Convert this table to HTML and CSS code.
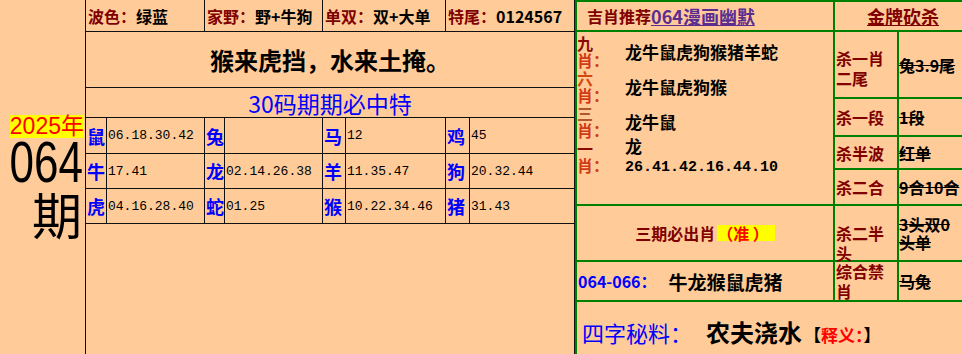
FILE: index.html
```html
<!DOCTYPE html>
<html lang="zh-CN">
<head>
<meta charset="utf-8">
<title>064期</title>
<link rel="stylesheet" href="styles.css">
</head>
<body>
<div class="page">
  <div class="issue">
    <span class="year">2025年</span>
    <div class="num">064</div>
    <div class="qi">期</div>
  </div>

  <div class="mid">
    <div class="grid">
      <div class="info"><span class="k">波色：</span>绿蓝</div>
      <div class="info"><span class="k">家野：</span>野+牛狗</div>
      <div class="info"><span class="k">单双：</span>双+大单</div>
      <div class="info"><span class="k">特尾：</span>0124567</div>
      <div class="motto">猴来虎挡，水来土掩。</div>
      <div class="title">30码期期必中特</div>

      <div class="z">鼠</div><div class="n">06.18.30.42</div>
      <div class="z">兔</div><div class="n"></div>
      <div class="z">马</div><div class="n">12</div>
      <div class="z">鸡</div><div class="n">45</div>

      <div class="z">牛</div><div class="n">17.41</div>
      <div class="z">龙</div><div class="n">02.14.26.38</div>
      <div class="z">羊</div><div class="n">11.35.47</div>
      <div class="z">狗</div><div class="n">20.32.44</div>

      <div class="z">虎</div><div class="n">04.16.28.40</div>
      <div class="z">蛇</div><div class="n">01.25</div>
      <div class="z">猴</div><div class="n">10.22.34.46</div>
      <div class="z">猪</div><div class="n">31.43</div>
    </div>
  </div>

  <div class="side">
    <div class="rec"><span class="rec-k">吉肖推荐</span><span class="link">064漫画幽默</span></div>
    <div class="kill-h"><span>金牌砍杀</span></div>

    <div class="picks">
      <div class="pick">
        <div class="pl"><span class="c1">九</span><br><span class="c2">肖：</span></div>
        <div class="pv">龙牛鼠虎狗猴猪羊蛇</div>
      </div>
      <div class="pick">
        <div class="pl"><span class="c3">六</span><br><span class="c2">肖：</span></div>
        <div class="pv">龙牛鼠虎狗猴</div>
      </div>
      <div class="pick">
        <div class="pl"><span class="c4">三</span><br><span class="c2">肖：</span></div>
        <div class="pv">龙牛鼠</div>
      </div>
      <div class="pick">
        <div class="pl"><span class="c1">一</span><br><span class="c2">肖：</span></div>
        <div class="pv">龙<br><span class="nums">26.41.42.16.44.10</span></div>
      </div>
    </div>

    <div class="kl r2 top1">杀一肖二尾</div>
    <div class="kv r2">兔3.9尾</div>
    <div class="kl r3">杀一段</div>
    <div class="kv r3">1段</div>
    <div class="kl r4">杀半波</div>
    <div class="kv r4">红单</div>
    <div class="kl r5">杀二合</div>
    <div class="kv r5">9合10合</div>

    <div class="must"><span class="must-k">三期必出肖</span><span class="zhun">（准 ）</span></div>
    <div class="kl r6 top2">杀二半头</div>
    <div class="kv r6">3头双0头单</div>

    <div class="range"><span class="rng">064-066：</span><span class="rng-v">牛龙猴鼠虎猪</span></div>
    <div class="kl r7">综合禁肖</div>
    <div class="kv r7">马兔</div>

    <div class="secret"><span class="sk">四字秘料：</span><span class="sv">农夫浇水</span><span class="sx">【<span class="sr">释义：</span>】</span></div>
  </div>
</div>
</body>
</html>
```

FILE: styles.css
```css
* {
  box-sizing: border-box;
  margin: 0;
  padding: 0;
}

html,
body {
  width: 962px;
  height: 354px;
  overflow: hidden;
}

body {
  background: #ffcc99;
  color: #000;
  font-family: "Noto Sans CJK SC", sans-serif;
}

.page {
  display: flex;
  width: 971px;
  height: 354px;
}

/* ---------- left issue column ---------- */
.issue {
  flex: none;
  width: 85px;
  padding-top: 115px;
  padding-right: 1px;
  display: flex;
  flex-direction: column;
  align-items: flex-end;
}

.year {
  display: block;
  font-family: "Liberation Sans", "Noto Sans CJK SC", sans-serif;
  font-size: 23px;
  line-height: 23px;
  color: #ff0000;
  background: #ffff00;
}

.num {
  font-family: "Liberation Sans", sans-serif;
  font-size: 44px;
  line-height: 44px;
  margin-top: 3px;
  margin-right: 1px;
  transform: scaleY(1.3);
  transform-origin: center;
}

.qi {
  font-size: 50px;
  line-height: 50px;
  margin-top: 3px;
  margin-right: 2px;
}

/* ---------- middle table ---------- */
.mid {
  flex: none;
  width: 490px;
  height: 354px;
  border-left: 1px solid #111;
  border-right: 1px solid #111;
}

.grid {
  display: grid;
  grid-template-columns: 20px 97px 19px 97px 22px 99px 23px 104px;
  grid-template-rows: 31px 55px 29px 35px 34px 34px;
  gap: 1px;
  background: #111;
  border-bottom: 1px solid #111;
}

.grid > div {
  background: #ffcc99;
  display: flex;
  align-items: center;
  white-space: nowrap;
}

.info {
  grid-column: span 2;
  padding-left: 2px;
  font-size: 16px;
  font-weight: bold;
}

.k {
  color: #800000;
}

.motto {
  grid-column: span 8;
  justify-content: center;
  font-size: 24px;
  font-weight: bold;
}

.title {
  grid-column: span 8;
  justify-content: center;
  font-size: 23px;
  color: #0000ff;
}

.z {
  padding-left: 1px;
  font-size: 18px;
  font-weight: bold;
  color: #0000ff;
}

.n {
  padding-left: 1px;
  font-family: "Liberation Mono", monospace;
  font-size: 13px;
}

/* ---------- right panel ---------- */
.side {
  flex: none;
  width: 396px;
  height: 364px;
  display: grid;
  grid-template-columns: 256px 62px 72px;
  grid-template-rows: 28px 65px 36px 31px 34px 54px 38px 60px;
  gap: 2px;
  padding: 2px 0 0 2px;
  background: #008000;
  align-content: start;
}

.side > div {
  background: #ffcc99;
}

.rec {
  grid-column: 1;
  grid-row: 1;
  display: flex;
  align-items: center;
  padding-left: 10px;
  white-space: nowrap;
}

.rec-k {
  font-size: 16px;
  font-weight: bold;
  color: #800000;
}

.link {
  font-size: 18px;
  font-weight: bold;
  color: #5b2d91;
  text-decoration: underline;
}

.kill-h {
  grid-column: 2 / 4;
  grid-row: 1;
  display: flex;
  align-items: center;
  justify-content: center;
  font-size: 18px;
  font-weight: bold;
  color: #800000;
  text-decoration: underline;
}

.picks {
  grid-column: 1;
  grid-row: 2 / 6;
  padding-top: 2px;
}

.pick {
  display: flex;
  align-items: center;
  height: 35px;
}

.pl {
  flex: none;
  width: 20px;
  font-size: 16px;
  font-weight: bold;
  line-height: 17px;
  white-space: nowrap;
}

.c1 { color: #8b0a00; }
.c2 { color: #d23a14; }
.c3 { color: #d24a10; }
.c4 { color: #b0582c; }

.pv {
  margin-left: 28px;
  font-size: 17px;
  font-weight: bold;
  line-height: 18px;
  white-space: nowrap;
}

.nums {
  font-family: "Liberation Mono", monospace;
  font-size: 15px;
}

.kl {
  grid-column: 2;
  display: flex;
  align-items: center;
  padding-left: 1px;
  font-size: 16px;
  font-weight: bold;
  line-height: 20px;
  color: #800000;
}

.kl.top1 {
  align-items: flex-start;
  padding-top: 16px;
}

.kl.top2 {
  align-items: flex-start;
  padding-top: 17px;
}

.kv {
  grid-column: 3;
  display: flex;
  align-items: center;
  padding-right: 10px;
  font-size: 16px;
  font-weight: bold;
  line-height: 18px;
  text-decoration: line-through;
}

.r2 { grid-row: 2; }
.r3 { grid-row: 3; }
.r4 { grid-row: 4; }
.r5 { grid-row: 5; }
.r6 { grid-row: 6; }
.r7 { grid-row: 7; }

.must {
  grid-column: 1;
  grid-row: 6;
  display: flex;
  align-items: center;
  justify-content: center;
  white-space: nowrap;
}

.must-k {
  font-size: 16px;
  font-weight: bold;
  color: #800000;
}

.zhun {
  display: inline-block;
  margin-left: 2px;
  padding-right: 6px;
  font-size: 16px;
  line-height: 16px;
  font-weight: bold;
  color: #ff0000;
  background: #ffff00;
  white-space: pre;
}

.range {
  grid-column: 1;
  grid-row: 7;
  display: flex;
  align-items: center;
  padding-left: 1px;
  white-space: nowrap;
}

.rng {
  font-size: 16px;
  font-weight: bold;
  color: #0000ff;
}

.rng-v {
  margin-left: 12px;
  font-size: 19px;
  font-weight: bold;
}

.secret {
  grid-column: 1 / 4;
  grid-row: 8;
  padding-left: 5px;
  line-height: 60px;
  white-space: nowrap;
}

.sk {
  font-size: 22px;
  color: #0000ff;
}

.sv {
  margin-left: 14px;
  font-size: 24px;
  font-weight: bold;
}

.sx {
  margin-left: 2px;
  font-size: 17px;
  font-weight: bold;
}

.sr {
  color: #ff0000;
}
```
